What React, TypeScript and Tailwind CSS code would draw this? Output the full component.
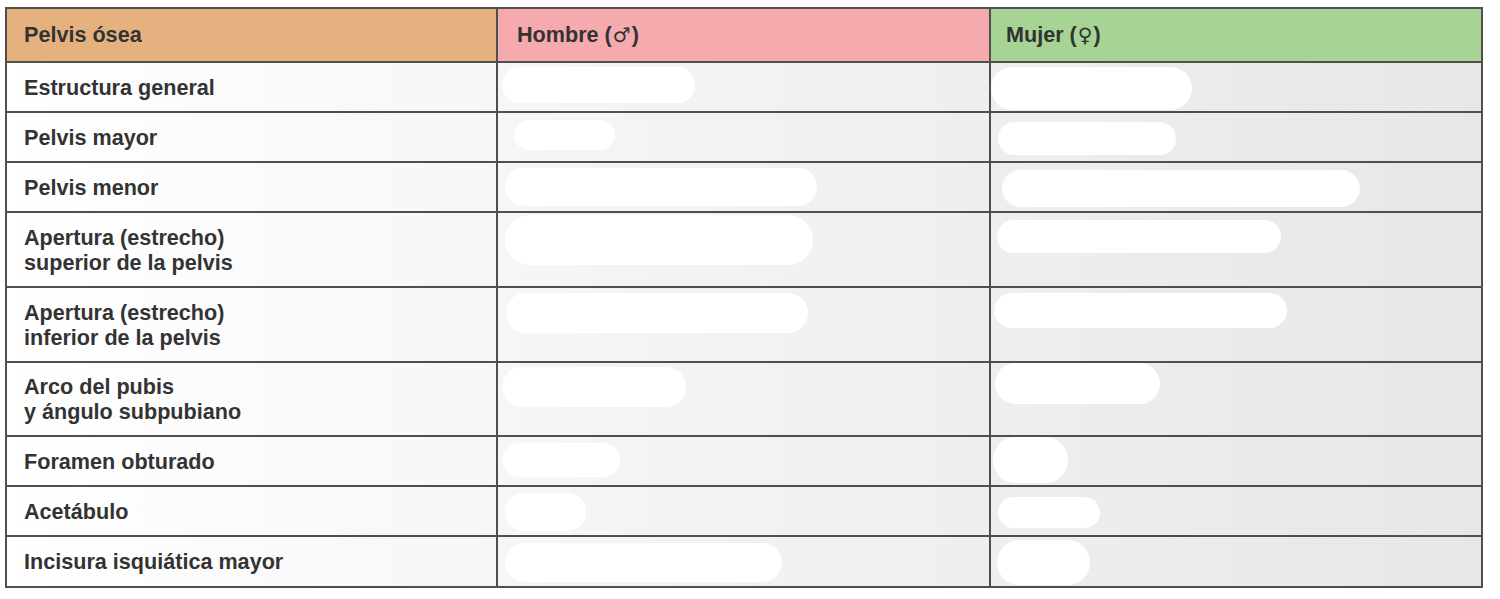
const rows = [
  {
    label: ['Estructura general'],
    h: 'h-[50px]',
    male: 'ml-[4px] mt-[4px] w-[193px] h-[36px]',
    female: 'ml-[0px] mt-[4px] w-[201px] h-[43px]',
  },
  {
    label: ['Pelvis mayor'],
    h: 'h-[50px]',
    male: 'ml-[16px] mt-[7px] w-[101px] h-[30px]',
    female: 'ml-[7px] mt-[9px] w-[178px] h-[33px]',
  },
  {
    label: ['Pelvis menor'],
    h: 'h-[50px]',
    male: 'ml-[7px] mt-[5px] w-[312px] h-[38px]',
    female: 'ml-[11px] mt-[7px] w-[358px] h-[37px]',
  },
  {
    label: ['Apertura (estrecho)', 'superior de la pelvis'],
    h: 'h-[75px]',
    male: 'ml-[7px] mt-[2px] w-[308px] h-[50px]',
    female: 'ml-[6px] mt-[7px] w-[284px] h-[33px]',
  },
  {
    label: ['Apertura (estrecho)', 'inferior de la pelvis'],
    h: 'h-[75px]',
    male: 'ml-[8px] mt-[5px] w-[302px] h-[40px]',
    female: 'ml-[3px] mt-[5px] w-[293px] h-[35px]',
  },
  {
    label: ['Arco del pubis', 'y ángulo subpubiano'],
    h: 'h-[74px]',
    male: 'ml-[4px] mt-[4px] w-[184px] h-[40px]',
    female: 'ml-[4px] mt-[0px] w-[165px] h-[41px]',
  },
  {
    label: ['Foramen obturado'],
    h: 'h-[50px]',
    male: 'ml-[4px] mt-[6px] w-[118px] h-[34px]',
    female: 'ml-[2px] mt-[0px] w-[75px] h-[46px]',
  },
  {
    label: ['Acetábulo'],
    h: 'h-[50px]',
    male: 'ml-[7px] mt-[6px] w-[81px] h-[38px]',
    female: 'ml-[7px] mt-[10px] w-[102px] h-[31px]',
  },
  {
    label: ['Incisura isquiática mayor'],
    h: 'h-[49px]',
    male: 'ml-[7px] mt-[6px] w-[277px] h-[39px]',
    female: 'ml-[6px] mt-[3px] w-[93px] h-[45px]',
  },
];

export default function App() {
  return (
    <div className="w-[1500px] h-[599px] bg-white pt-[7px] pl-[5px] font-['Liberation_Sans',Arial,sans-serif] font-bold text-[21.6px] text-[#333]">
      <div className="w-[1478px] border-2 border-[#4f4f4f]">
        {/* Header */}
        <div className="grid grid-cols-[491px_493px_1fr] h-[54px] border-b-2 border-[#4f4f4f]">
          <div className="bg-[#e5b27f] border-r-2 border-[#4f4f4f] flex items-center pl-[17px]">
            Pelvis ósea
          </div>
          <div className="bg-[#f5aaad] border-r-2 border-[#4f4f4f] flex items-center pl-[19px]">
            Hombre (<span className="font-['DejaVu_Sans',sans-serif] font-normal text-[20px] px-[1px]">♂</span>)
          </div>
          <div className="bg-[#a7d394] flex items-center pl-[15px]">
            Mujer (<span className="font-['DejaVu_Sans',sans-serif] font-normal text-[20px] px-[1px]">♀</span>)
          </div>
        </div>

        {/* Body */}
        <div className="bg-linear-to-r from-white via-[#f2f2f2] to-[#e7e7e7]">
          {rows.map((row, i) => (
            <div
              key={i}
              className={`grid grid-cols-[491px_493px_1fr] ${row.h} ${
                i < rows.length - 1 ? 'border-b-2 border-[#4f4f4f]' : ''
              }`}
            >
              <div className="border-r-2 border-[#4f4f4f] flex flex-col justify-center pl-[17px] leading-[25px]">
                {row.label.map((line) => (
                  <span key={line}>{line}</span>
                ))}
              </div>
              <div className="border-r-2 border-[#4f4f4f] overflow-hidden">
                <div className={`bg-white rounded-full ${row.male}`} />
              </div>
              <div className="overflow-hidden">
                <div className={`bg-white rounded-full ${row.female}`} />
              </div>
            </div>
          ))}
        </div>
      </div>
    </div>
  );
}
